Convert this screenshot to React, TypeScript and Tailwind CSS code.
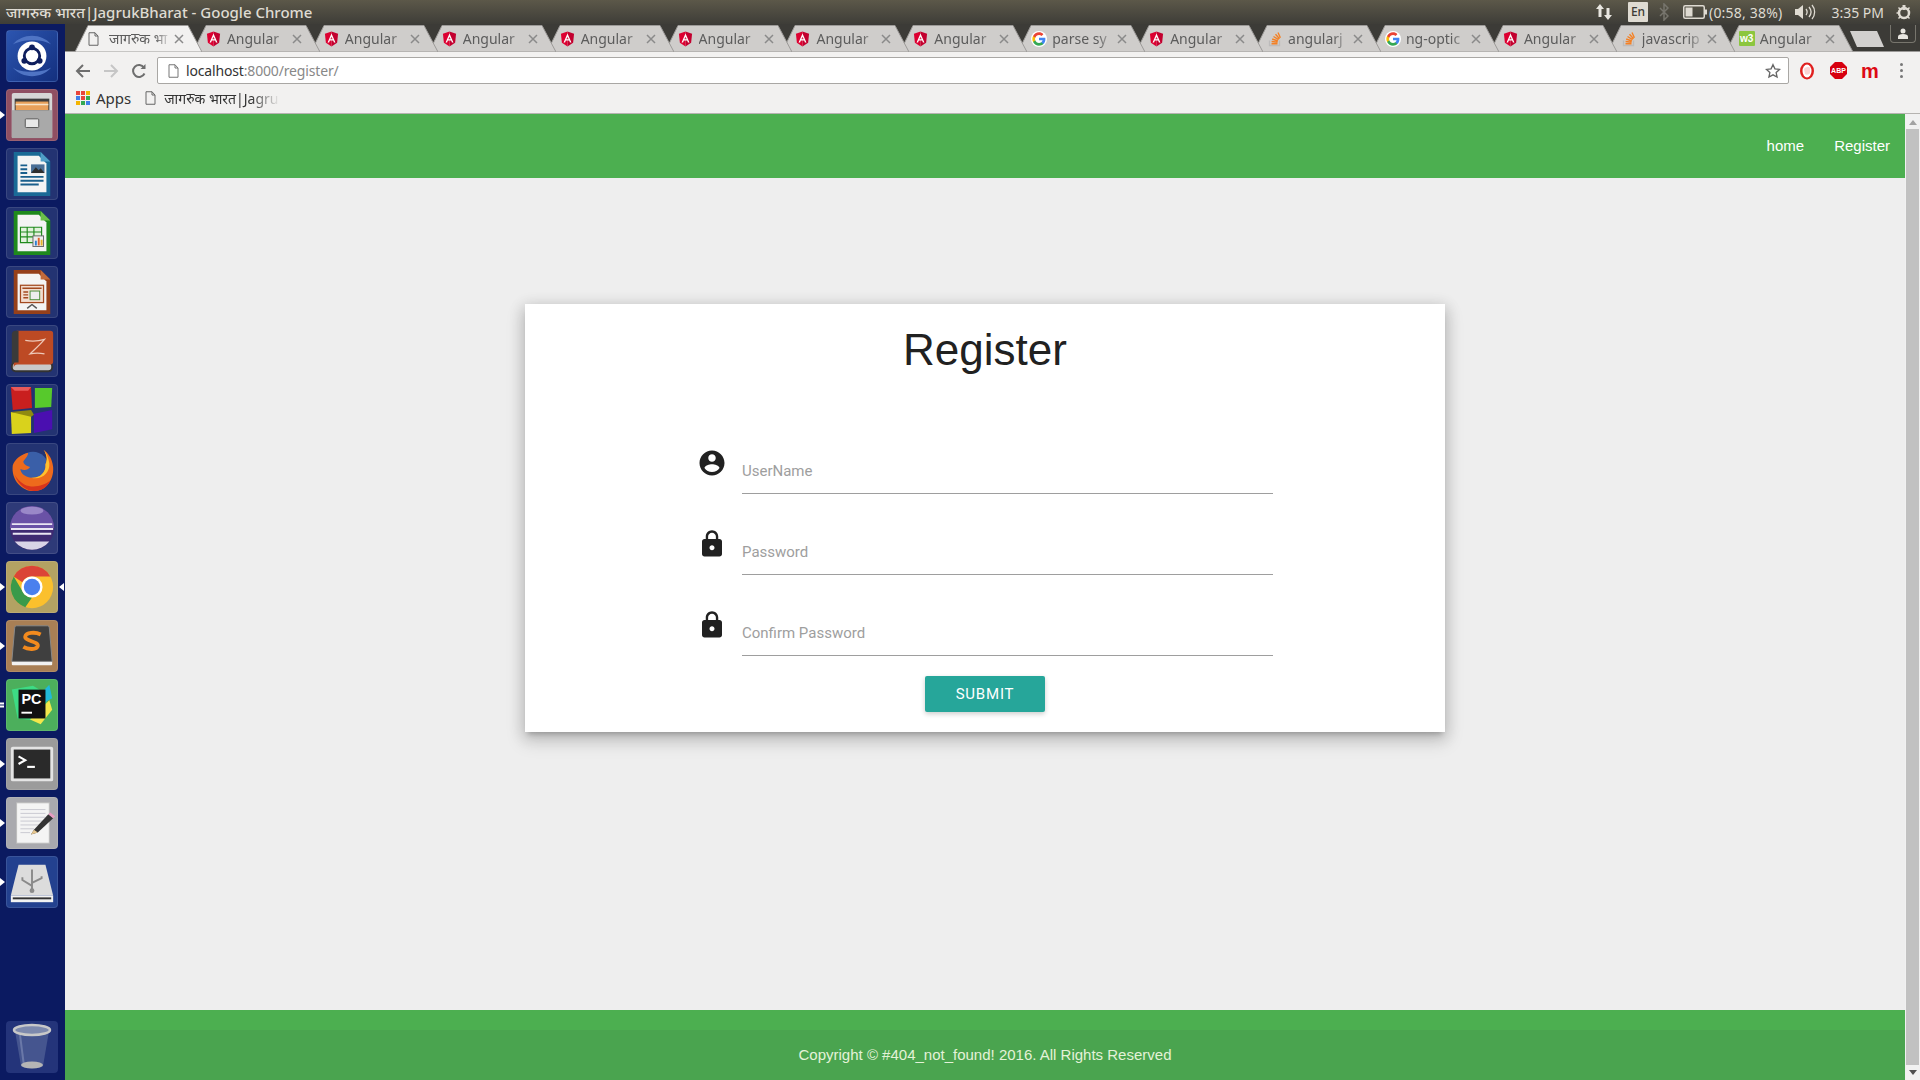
import type { ReactNode } from "react";

const AngularIcon = () => (
  <svg width="15" height="16" viewBox="0 0 16 17" className="shrink-0">
    <path d="M8 0.5 L15 3 L14 12.5 L8 16.5 Z" fill="#c3002f" />
    <path d="M8 0.5 L1 3 L2 12.5 L8 16.5 Z" fill="#dd0031" />
    <path d="M8 2.6 L3.8 12.2 H5.4 L6.2 10.1 H9.8 L10.6 12.2 H12.2 Z M8 6 L9.2 8.8 H6.8 Z" fill="#fff" />
  </svg>
);

const GoogleIcon = () => (
  <svg width="16" height="16" viewBox="0 0 24 24" className="shrink-0">
    <circle cx="12" cy="12" r="12" fill="#fff" />
    <path d="M21.6 12.2c0-.7-.1-1.3-.2-1.9H12v3.7h5.4c-.2 1.2-.9 2.300-2 3v2.500h3.200c1.900-1.700 3-4.300 3-7.300z" fill="#4285f4" />
    <path d="M12 22c2.700 0 5-.9 6.600-2.500l-3.200-2.500c-.9.600-2 1-3.400 1-2.600 0-4.800-1.800-5.600-4.100H3.100v2.600C4.800 19.800 8.100 22 12 22z" fill="#34a853" />
    <path d="M6.400 13.900c-.2-.6-.3-1.200-.3-1.900s.1-1.300.3-1.900V7.500H3.100C2.400 8.800 2 10.400 2 12s.4 3.200 1.100 4.500z" fill="#fbbc05" />
    <path d="M12 6c1.500 0 2.800.5 3.800 1.500l2.800-2.800C16.900 3 14.700 2 12 2 8.100 2 4.800 4.200 3.100 7.500l3.300 2.600C7.200 7.800 9.400 6 12 6z" fill="#ea4335" />
  </svg>
);

const StackIcon = () => (
  <svg width="16" height="17" viewBox="0 0 16 17" className="shrink-0" fill="none">
    <path d="M2.500 10.500v5h10v-5" stroke="#bcbbbb" strokeWidth="1.300" />
    <path d="M4.500 13.800h6 M4.600 11.500l6 .8 M5.200 9l5.700 2 M6.500 6.500l5.100 3.200 M8.500 4.300l4 4.400 M11 2.500l2.400 5.300" stroke="#f48024" strokeWidth="1.400" />
  </svg>
);

const W3Icon = () => (
  <span className="shrink-0 w-[16px] h-[15px] bg-[#8cc63f] rounded-[1px] text-white text-[10px] leading-[15px] font-bold text-center font-['Liberation_Sans',sans-serif]">
    w3
  </span>
);

const PageIcon = ({ color = "#666" }: { color?: string }) => (
  <svg width="11" height="14" viewBox="0 0 11 14" fill="none" className="shrink-0">
    <path d="M1 .75h6L10 4v9.250H1z M7 .75V4h3" stroke={color} strokeWidth="1" />
  </svg>
);

const tabs: { title: string; icon: ReactNode }[] = [
  { title: "Angular", icon: <AngularIcon /> },
  { title: "Angular", icon: <AngularIcon /> },
  { title: "Angular", icon: <AngularIcon /> },
  { title: "Angular", icon: <AngularIcon /> },
  { title: "Angular", icon: <AngularIcon /> },
  { title: "Angular", icon: <AngularIcon /> },
  { title: "Angular", icon: <AngularIcon /> },
  { title: "parse sy", icon: <GoogleIcon /> },
  { title: "Angular", icon: <AngularIcon /> },
  { title: "angularj", icon: <StackIcon /> },
  { title: "ng-optic", icon: <GoogleIcon /> },
  { title: "Angular", icon: <AngularIcon /> },
  { title: "javascrip", icon: <StackIcon /> },
  { title: "Angular", icon: <W3Icon /> },
];

const Tab = ({ title, icon, active, z }: { title: string; icon: ReactNode; active?: boolean; z: number }) => (
  <div className="relative w-[127px] h-[27px] -mr-[9.1px] shrink-0" style={{ zIndex: z }}>
    <svg width="127" height="27" viewBox="0 0 127 27" className="absolute inset-0">
      <path
        d="M0 27 L13 .5 H113 L127 27 Z"
        fill={active ? "#f2f1f0" : "#cfcdcb"}
        stroke="#9c9a98"
        strokeWidth="1"
      />
    </svg>
    <div className="relative flex items-center h-full pl-[13px]">
      <div className="w-[19px] flex">{icon}</div>
      <span className="ml-[2px] w-[63px] overflow-hidden whitespace-nowrap text-[14px] text-[#5c5c5c] font-['Noto_Sans',sans-serif] [mask-image:linear-gradient(to_right,black_72%,transparent)]">
        {title}
      </span>
      <svg width="10" height="10" viewBox="0 0 10 10" className="ml-[2px]" stroke="#8a8a8a" strokeWidth="1.500">
        <path d="M1 1l8 8M9 1l-8 8" />
      </svg>
    </div>
  </div>
);

const launcher: { bg: string; left?: number; right?: boolean; icon: ReactNode }[] = [
  {
    bg: "bg-linear-to-br from-[#2c55b0] to-[#14307f]",
    icon: (
      <>
        <path d="M6 14C16 2 36 2 46 14 38 8 16 8 6 14zM46 38C36 50 16 50 6 38c8 6 30 6 40 0z" fill="#4f74c4" />
        <circle cx="26" cy="26" r="15" fill="#fff" />
        <circle cx="26" cy="26" r="8" fill="none" stroke="#0f1f5e" strokeWidth="3" />
        <circle cx="26" cy="17" r="3" fill="#0f1f5e" />
        <circle cx="18" cy="31" r="3" fill="#0f1f5e" />
        <circle cx="34" cy="31" r="3" fill="#0f1f5e" />
      </>
    ),
  },
  {
    bg: "bg-[#8f4f62]",
    left: 1,
    icon: (
      <>
        <rect x="5" y="3" width="42" height="47" rx="2" fill="#d6d6d6" />
        <rect x="8" y="9" width="36" height="16" fill="#3d3d3d" />
        <rect x="9" y="12" width="34" height="9" fill="#e8a05a" />
        <path d="M9 15h34" stroke="#f7e3c8" strokeWidth="1.500" />
        <rect x="5" y="21" width="42" height="29" fill="#a9a9a9" />
        <rect x="19" y="30" width="14" height="9" rx="1" fill="#e8e8e8" stroke="#555" />
      </>
    ),
  },
  {
    bg: "bg-[#233372]",
    icon: (
      <>
        <path d="M7 3h28l10 10v36H7z" fill="#1a6a96" />
        <path d="M11 7h22l8 8v30H11z" fill="#f4f4f4" />
        <path d="M35 3l10 10H35z" fill="#4f9dc6" />
        <path d="M14 17h7M14 21h7M14 25h7M14 29h24M14 33h24M14 37h19" stroke="#1a5f8c" strokeWidth="2" />
        <rect x="25" y="16" width="14" height="9" fill="#4a6f96" />
        <path d="M25 25l5-6 3 3 2-2 4 5z" fill="#2e2e2e" />
      </>
    ),
  },
  {
    bg: "bg-[#233372]",
    icon: (
      <>
        <path d="M7 3h28l10 10v36H7z" fill="#1f8a1c" />
        <path d="M11 7h22l8 8v30H11z" fill="#f4f4f4" />
        <path d="M35 3l10 10H35z" fill="#6cbf4a" />
        <path d="M14 20h22v16H14z M14 25h22M14 30h22M21 20v16M28 20v16" fill="#e2f2dc" stroke="#1f8a1c" strokeWidth="1.200" />
        <rect x="27" y="29" width="11" height="11" fill="#eee" stroke="#666" />
        <rect x="29" y="34" width="2" height="5" fill="#2f7fd0" />
        <rect x="32" y="31" width="2" height="8" fill="#e0632a" />
        <rect x="35" y="33" width="2" height="6" fill="#e6b32a" />
      </>
    ),
  },
  {
    bg: "bg-[#233372]",
    icon: (
      <>
        <path d="M7 3h28l10 10v36H7z" fill="#96401a" />
        <path d="M11 7h22l8 8v30H11z" fill="#f4f4f4" />
        <path d="M35 3l10 10H35z" fill="#c46a3a" />
        <rect x="14" y="19" width="24" height="18" fill="#f2ddd0" stroke="#a3491f" strokeWidth="1.300" />
        <path d="M16 22h20M17 26h5M17 29h5M17 32h5" stroke="#a3491f" strokeWidth="1.500" />
        <rect x="24" y="25" width="10" height="9" fill="#eee" stroke="#4a8f3a" />
        <path d="M26 39l-5 4M26 39l5 4" stroke="#555" strokeWidth="1.500" />
      </>
    ),
  },
  {
    bg: "bg-[#233372]",
    icon: (
      <>
        <rect x="5" y="38" width="42" height="9" rx="4" fill="#c9c9c9" stroke="#333" strokeWidth="2" />
        <path d="M7 9a4 4 0 0 1 4-4h34a3 3 0 0 1 3 3v29a3 3 0 0 1-3 3H11a4 4 0 0 0-4 4z" fill="#bd4a24" />
        <path d="M5 9a4 4 0 0 1 4-4h3v33H9a4 4 0 0 0-4 3z" fill="#3a3a3a" />
        <path d="M19 15c6 1 13 1 20-1-5 6-11 11-15 15 5-1 10-1 15 0" fill="none" stroke="#eec8b8" strokeWidth="1.300" />
      </>
    ),
  },
  {
    bg: "bg-[#233372]",
    icon: (
      <>
        <path d="M4 2h21l1 22-20 2z" fill="#c91f1f" />
        <path d="M4 2h21l-3 4H8z" fill="#e85a5a" />
        <path d="M29 3h18l-1 20-17 1z" fill="#57c92c" />
        <path d="M4 28l21 3v19l-20 1z" fill="#d9d21c" />
        <path d="M4 28l21-2 3 5-3 2z" fill="#8f8a10" />
        <path d="M28 30l19-4v20l-19 4z" fill="#4a0fb0" />
      </>
    ),
  },
  {
    bg: "bg-[#233372]",
    icon: (
      <>
        <circle cx="27" cy="24" r="16" fill="#3a5fa8" />
        <path d="M6 22C4 38 16 49 28 49 40 49 49 38 48 24 47 14 42 9 38 6 42 12 42 17 40 21 41 30 33 36 25 35 18 34 14 30 14 26 18 28 22 27 24 24 20 23 17 21 17 18 20 14 22 12 22 9 14 11 8 16 6 22Z" fill="#ee6a1c" />
        <path d="M38 6C42 12 42 17 40 21 41 30 33 36 25 35 36 38 45 30 44 20 43 14 41 9 38 6Z" fill="#ffc02e" />
        <path d="M8 32C12 44 22 49 28 49 36 49 42 45 45 38 38 44 26 46 18 42 14 40 10 36 8 32Z" fill="#d8341c" />
      </>
    ),
  },
  {
    bg: "bg-[#2e3a78]",
    icon: (
      <>
        <circle cx="26" cy="26" r="23" fill="#3e2a72" />
        <path d="M3 26a23 23 0 0 1 46 0z" fill="#6a52a6" />
        <path d="M8 40a23 23 0 0 0 36 0z" fill="#d9d4e6" />
        <ellipse cx="26" cy="8" rx="12" ry="4" fill="#9a88c8" />
        <path d="M5 22h42M4 27h44M6 32h40" stroke="#e9e5f2" strokeWidth="2" />
      </>
    ),
  },
  {
    bg: "bg-[#b3a263]",
    left: 1,
    right: true,
    icon: (
      <>
        <circle cx="26" cy="26" r="22" fill="#fbc02d" />
        <path d="M26 4a22 22 0 0 1 19 11H26a11 11 0 0 0-10 6L7 15A22 22 0 0 1 26 4z" fill="#db4437" />
        <path d="M7 15l10 17a11 11 0 0 0 9 5l-7 10A22 22 0 0 1 7 15z" fill="#3a9a4a" />
        <circle cx="26" cy="26" r="11" fill="#fff" />
        <circle cx="26" cy="26" r="8.500" fill="#4a80ee" />
      </>
    ),
  },
  {
    bg: "bg-[#a97f55]",
    left: 1,
    icon: (
      <>
        <rect x="5" y="41" width="42" height="5" rx="1" fill="#f2f2f2" />
        <path d="M8 7a2 2 0 0 1 2-2h32a2 2 0 0 1 2 2l3 35H5z" fill="#3f3f3f" stroke="#888" />
        <path d="M35 14c-6-3-15-2-16 2-1 5 14 5 13 10-1 4-10 4-15 1" fill="none" stroke="#f28a1e" strokeWidth="4" />
      </>
    ),
  },
  {
    bg: "bg-[#4caf5c]",
    left: 2,
    icon: (
      <>
        <path d="M5 10l22-4 10 6 8 22-14 8-20-2z" fill="#3ddc84" />
        <path d="M27 22L44 5l3 14-9 5z" fill="#21b9d8" />
        <path d="M24 41l20-20 3 10-12 15z" fill="#f2e74b" />
        <rect x="12" y="10" width="28" height="30" fill="#111" />
        <text x="15" y="25" fontSize="15" fontWeight="700" fill="#fff" fontFamily="Liberation Sans, sans-serif">PC</text>
        <rect x="15" y="33" width="11" height="2" fill="#fff" />
      </>
    ),
  },
  {
    bg: "bg-[#9b9b9b]",
    left: 1,
    icon: (
      <>
        <rect x="4" y="8" width="44" height="36" rx="2" fill="#e4e4e4" />
        <rect x="7" y="11" width="38" height="30" fill="#2a2a2a" />
        <path d="M12 18l7 4-7 4" fill="none" stroke="#fff" strokeWidth="2.200" />
        <path d="M21 29h8" stroke="#fff" strokeWidth="2.200" />
      </>
    ),
  },
  {
    bg: "bg-[#a9a9ae]",
    left: 1,
    icon: (
      <>
        <rect x="10" y="5" width="34" height="42" fill="#f4f4f4" stroke="#bbb" />
        <path d="M14 12h26M14 16h26M14 20h26M14 24h26M14 28h20M14 32h14M14 36h10" stroke="#c8c8d0" strokeWidth="1" />
        <path d="M28 33l15-16 5 4-16 15-7 2z" fill="#333" />
        <path d="M43 17l2-2 5 4-2 2z" fill="#e79bc1" />
        <path d="M25 38l3-5 4 3z" fill="#e8c890" />
      </>
    ),
  },
  {
    bg: "bg-[#23418f]",
    left: 1,
    icon: (
      <>
        <path d="M12 8h28l8 32H4z" fill="#dcdcdc" />
        <rect x="4" y="40" width="44" height="7" fill="#f2f2f2" />
        <rect x="6" y="42" width="40" height="2" fill="#333" />
        <path d="M26 13v21M26 30l-10-6v-3M26 27l10-5v-2" fill="none" stroke="#8a8a8a" strokeWidth="2" />
        <circle cx="26" cy="35" r="2.500" fill="#8a8a8a" />
      </>
    ),
  },
];

const Tile = ({ bg, left, right, icon }: { bg: string; left?: number; right?: boolean; icon: ReactNode }) => (
  <div className="relative shrink-0 flex justify-center">
    {left ? (
      <div className="absolute left-0 top-1/2 -translate-y-1/2 flex flex-col gap-[1px]">
        {left === 2 && <span className="block w-[4px] h-[2px] bg-white" />}
        {left === 2 && <span className="block w-[4px] h-[2px] bg-white" />}
        {left === 1 && (
          <span className="block w-0 h-0 border-y-[4px] border-y-transparent border-l-[5px] border-l-white" />
        )}
      </div>
    ) : null}
    {right && (
      <span className="absolute right-0 top-1/2 -translate-y-1/2 w-0 h-0 border-y-[4px] border-y-transparent border-r-[5px] border-r-white" />
    )}
    <div className={`w-[52px] h-[52px] rounded-[4px] border border-white/10 ${bg}`}>
      <svg width="50" height="50" viewBox="0 0 52 52">
        {icon}
      </svg>
    </div>
  </div>
);

const Trash = () => (
  <svg width="52" height="52" viewBox="0 0 52 52">
    <rect width="52" height="52" rx="4" fill="#24347a" />
    <path d="M9 10l6 35c3 3 19 3 22 0l6-35z" fill="#45558f" />
    <path d="M14 14l4 31" stroke="#6a78a8" strokeWidth="2" />
    <ellipse cx="26" cy="9" rx="18" ry="5" fill="#7d89ad" stroke="#c8c8c8" strokeWidth="2.500" />
    <ellipse cx="26" cy="44" rx="11" ry="3.500" fill="#b5b5b5" />
  </svg>
);

const AccountIcon = () => (
  <svg width="30" height="30" viewBox="0 0 24 24" fill="#212121" className="shrink-0">
    <path d="M12 2C6.48 2 2 6.48 2 12s4.48 10 10 10 10-4.48 10-10S17.52 2 12 2zm0 3c1.66 0 3 1.34 3 3s-1.34 3-3 3-3-1.34-3-3 1.34-3 3-3zm0 14.2c-2.5 0-4.71-1.28-6-3.22.03-1.99 4-3.08 6-3.08 1.99 0 5.97 1.09 6 3.08-1.29 1.94-3.5 3.22-6 3.22z" />
  </svg>
);

const LockIcon = () => (
  <svg width="30" height="30" viewBox="0 0 24 24" fill="#212121" className="shrink-0">
    <path d="M18 8h-1V6c0-2.76-2.24-5-5-5S7 3.24 7 6v2H6c-1.1 0-2 .9-2 2v10c0 1.1.9 2 2 2h12c1.1 0 2-.9 2-2V10c0-1.1-.9-2-2-2zm-6 9c-1.1 0-2-.9-2-2s.9-2 2-2 2 .9 2 2-.9 2-2 2zm3.1-9H8.9V6c0-1.71 1.39-3.1 3.1-3.1 1.71 0 3.1 1.39 3.1 3.1v2z" />
  </svg>
);

const Field = ({ icon, placeholder, type }: { icon: ReactNode; placeholder: string; type: string }) => (
  <div className="flex gap-[15px]">
    {icon}
    <input
      type={type}
      placeholder={placeholder}
      className="flex-1 h-[46px] border-b border-[#9e9e9e] pt-[1px] text-[15px] font-['Roboto',sans-serif] outline-none placeholder:text-[#9e9e9e]"
    />
  </div>
);

const TopPanel = () => (
  <div className="h-[24px] shrink-0 flex items-center bg-linear-to-b from-[#5c5849] to-[#3e3d38] text-[#dfdbd2] font-['Noto_Sans',sans-serif]">
    <span className="ml-[6px] text-[15px] font-medium whitespace-nowrap">जागरुक भारत|JagrukBharat - Google Chrome</span>
    <div className="ml-auto flex items-center text-[14px]">
      <svg width="18" height="18" viewBox="0 0 18 18" fill="#e8e6e0">
        <path d="M5 1l4 5H6.500v8h-3V6H1z M13 17l4-5h-2.500V5h-3v7H9z" />
      </svg>
      <span className="ml-[15px] w-[20px] h-[20px] bg-[#dfdbd2] text-[#3c3b37] text-[12px] leading-[20px] text-center rounded-[1px] font-medium">
        En
      </span>
      <svg width="10" height="18" viewBox="0 0 10 18" fill="none" stroke="#77756d" strokeWidth="1.500" className="ml-[11px]">
        <path d="M1 5l8 8-4 4V1l4 4-8 8" />
      </svg>
      <svg width="25" height="14" viewBox="0 0 25 14" fill="none" className="ml-[14px]">
        <rect x=".75" y=".75" width="20.500" height="12.500" rx="1.500" stroke="#dfdbd2" strokeWidth="1.500" />
        <rect x="2.500" y="2.500" width="7" height="9" fill="#dfdbd2" />
        <rect x="22" y="4.500" width="2" height="5" fill="#dfdbd2" />
      </svg>
      <span className="ml-[1px] tracking-[0.2px]">(0:58, 38%)</span>
      <svg width="22" height="18" viewBox="0 0 22 18" fill="none" className="ml-[12px]">
        <path d="M1 6h3l5-4v14l-5-4H1z" fill="#dfdbd2" />
        <path d="M12 6c1.500 2 1.500 4 0 6M15 4c2.500 3 2.500 7 0 10M18 2c3.500 4 3.500 10 0 14" stroke="#dfdbd2" strokeWidth="1.300" />
      </svg>
      <span className="ml-[15px]">3:35 PM</span>
      <svg width="18" height="18" viewBox="0 0 18 18" fill="none" stroke="#dfdbd2" className="ml-[11px] mr-[7px]">
        <circle cx="9" cy="10" r="5" strokeWidth="2.500" />
        <path d="M9 2v5" strokeWidth="3" />
        <path d="M9 3v14M1.500 10h15M3.500 4.500l2 2M14.500 4.500l-2 2M3.500 15.500l2-2M14.500 15.500l-2-2" strokeWidth="1.500" strokeDasharray="2 20" />
      </svg>
    </div>
  </div>
);

const TabStrip = () => (
  <div className="relative h-[28px] shrink-0 bg-[#3c3b37] flex pt-[1px] pl-[10px] border-b border-[#9c9a98]">
    <Tab active z={40} title="जागरुक भा" icon={<PageIcon />} />
    {tabs.map((t, i) => (
      <Tab key={i} title={t.title} icon={t.icon} z={30 - i} />
    ))}
    <svg width="34" height="16" viewBox="0 0 34 16" className="ml-[6px] mt-[6px]">
      <path d="M0 0H27L34 16H7Z" fill="#d2d0ce" />
    </svg>
    <div className="ml-auto mr-[4px] w-[26px] h-[18px] border border-t-0 border-[#77756d] rounded-b-[4px] flex items-center justify-center">
      <svg width="10" height="11" viewBox="0 0 10 11" fill="#e8e6e0">
        <circle cx="5" cy="3" r="2.500" />
        <path d="M0 11V8.500C0 7 2 6 5 6s5 1 5 2.500V11z" />
      </svg>
    </div>
  </div>
);

const Toolbar = () => (
  <div className="h-[62px] shrink-0 bg-[#f2f1f0] border-b border-[#b5b3b0] font-['Noto_Sans',sans-serif]">
    <div className="flex items-center h-[27px] mt-[5px]">
      <svg width="16" height="16" viewBox="0 0 16 16" fill="none" stroke="#6e6e6e" strokeWidth="2" className="ml-[10px]">
        <path d="M15 8H2M8 2L2 8l6 6" />
      </svg>
      <svg width="16" height="16" viewBox="0 0 16 16" fill="none" stroke="#c6c6c6" strokeWidth="2" className="ml-[12px]">
        <path d="M1 8h13M8 2l6 6-6 6" />
      </svg>
      <svg width="16" height="16" viewBox="0 0 16 16" fill="none" stroke="#6e6e6e" strokeWidth="2" className="ml-[12px]">
        <path d="M13.500 10.500A6 6 0 1 1 13 4.500" />
        <path d="M14.500 1v5h-5z" fill="#6e6e6e" stroke="none" />
      </svg>
      <div className="ml-[10px] w-[1632px] h-[27px] bg-white border border-[#a9a7a4] rounded-[2px] flex items-center pl-[10px] pr-[7px]">
        <PageIcon color="#777" />
        <span className="ml-[7px] text-[14px] text-[#333] tracking-[-0.16px]">
          localhost<span className="text-[#888]">:8000/register/</span>
        </span>
        <svg width="16" height="16" viewBox="0 0 24 24" fill="none" stroke="#666" strokeWidth="2" className="ml-auto">
          <path d="M12 2.500l2.900 6.300 6.900.8-5.100 4.700 1.400 6.800-6.100-3.400-6.100 3.400 1.400-6.800-5.100-4.700 6.900-.8z" />
        </svg>
      </div>
      <svg width="16" height="18" viewBox="0 0 16 18" className="ml-[10px]">
        <ellipse cx="8" cy="9" rx="7" ry="8.500" fill="#e0201f" />
        <ellipse cx="8" cy="9" rx="4.500" ry="6.500" fill="#fff" />
        <path d="M5 7c1-2 5-3 6-1v5c-1 2-4 2-5 1z" fill="#fbd5d5" />
      </svg>
      <svg width="17" height="17" viewBox="0 0 17 17" className="ml-[15px]">
        <path d="M5 0h7l5 5v7l-5 5H5l-5-5V5z" fill="#d7000f" />
        <text x="8.500" y="11" textAnchor="middle" fontSize="7" fontWeight="700" fill="#fff" fontFamily="Liberation Sans, sans-serif">ABP</text>
      </svg>
      <span className="ml-[13px] w-[20px] text-center text-[20px] leading-[18px] font-bold text-[#dd0a14] font-['Liberation_Sans',sans-serif]">
        m
      </span>
      <div className="ml-[20px] flex flex-col gap-[3px]">
        <span className="block w-[3px] h-[3px] rounded-full bg-[#777]" />
        <span className="block w-[3px] h-[3px] rounded-full bg-[#777]" />
        <span className="block w-[3px] h-[3px] rounded-full bg-[#777]" />
      </div>
    </div>
    <div className="flex items-center h-[20px] mt-[4px] pl-[11px] text-[14px] text-[#333]">
      <div className="grid grid-cols-3 gap-[1px] w-[14px]">
        {["#e8453c", "#e8453c", "#f4b400", "#3f7fe8", "#e8453c", "#34a853", "#f4b400", "#34a853", "#3f7fe8"].map((c, i) => (
          <span key={i} className="block w-[4px] h-[4px]" style={{ background: c }} />
        ))}
      </div>
      <span className="ml-[6px] text-[15px]">Apps</span>
      <div className="ml-[14px] flex items-center">
        <PageIcon />
      </div>
      <span className="ml-[8px] w-[116px] overflow-hidden whitespace-nowrap [mask-image:linear-gradient(to_right,black_75%,transparent)]">
        जागरुक भारत|Jagru
      </span>
    </div>
  </div>
);

const Scrollbar = () => (
  <div className="w-[15px] shrink-0 bg-[#f1f1f1] flex flex-col items-center">
    <span className="mt-[6px] w-0 h-0 border-x-[4px] border-x-transparent border-b-[5px] border-b-[#a3a3a3]" />
    <div className="mt-[4px] w-[13px] flex-1 bg-[#c1c1c1]" />
    <span className="mt-[5px] mb-[5px] w-0 h-0 border-x-[4px] border-x-transparent border-t-[5px] border-t-[#505050]" />
  </div>
);

export default function App() {
  return (
    <div className="w-[1920px] h-[1080px] overflow-hidden flex flex-col bg-[#3c3b37]">
      <TopPanel />
      <div className="flex-1 flex min-h-0">
        <div className="w-[65px] shrink-0 bg-[#0b1a61] flex flex-col gap-[7px] pt-[6px] pb-[7px] pr-[1px]">
          {launcher.map((l, i) => (
            <Tile key={i} {...l} />
          ))}
          <div className="mt-auto flex justify-center">
            <Trash />
          </div>
        </div>
        <div className="flex-1 flex flex-col min-w-0">
          <TabStrip />
          <Toolbar />
          <div className="flex-1 flex min-h-0">
            <div className="flex-1 flex flex-col bg-[#eeeeee] font-['Liberation_Sans',sans-serif]">
              <nav className="h-[64px] shrink-0 bg-[#4caf50] flex items-center justify-end gap-[30px] pr-[15px] text-[15px] text-white">
                <a>home</a>
                <a>Register</a>
              </nav>
              <main className="flex-1">
                <div className="mt-[126px] mx-auto w-[920px] h-[428px] bg-white px-[172px] shadow-[0_8px_17px_2px_rgba(0,0,0,0.14),0_3px_14px_2px_rgba(0,0,0,0.12),0_5px_5px_-3px_rgba(0,0,0,0.2)]">
                  <h1 className="h-[92px] flex items-center justify-center text-[44px] text-[#212121]">Register</h1>
                  <form className="mt-[52px] flex flex-col">
                    <div className="flex flex-col gap-[35px]">
                      <Field icon={<AccountIcon />} placeholder="UserName" type="text" />
                      <Field icon={<LockIcon />} placeholder="Password" type="password" />
                      <Field icon={<LockIcon />} placeholder="Confirm Password" type="password" />
                    </div>
                    <button
                      type="button"
                      className="mt-[20px] self-center w-[120px] h-[36px] rounded-[2px] bg-[#26a69a] text-white text-[15px] tracking-[0.8px] font-['Roboto',sans-serif] shadow-[0_2px_5px_rgba(0,0,0,0.2)]"
                    >
                      SUBMIT
                    </button>
                  </form>
                </div>
              </main>
              <footer className="h-[70px] shrink-0 bg-[#4aa44f] flex flex-col">
                <div className="h-[20px] bg-[#4caf50]" />
                <p className="flex-1 flex items-center justify-center text-[15px] text-[#e4f2d8]">
                  Copyright © #404_not_found! 2016. All Rights Reserved
                </p>
              </footer>
            </div>
            <Scrollbar />
          </div>
        </div>
      </div>
    </div>
  );
}
